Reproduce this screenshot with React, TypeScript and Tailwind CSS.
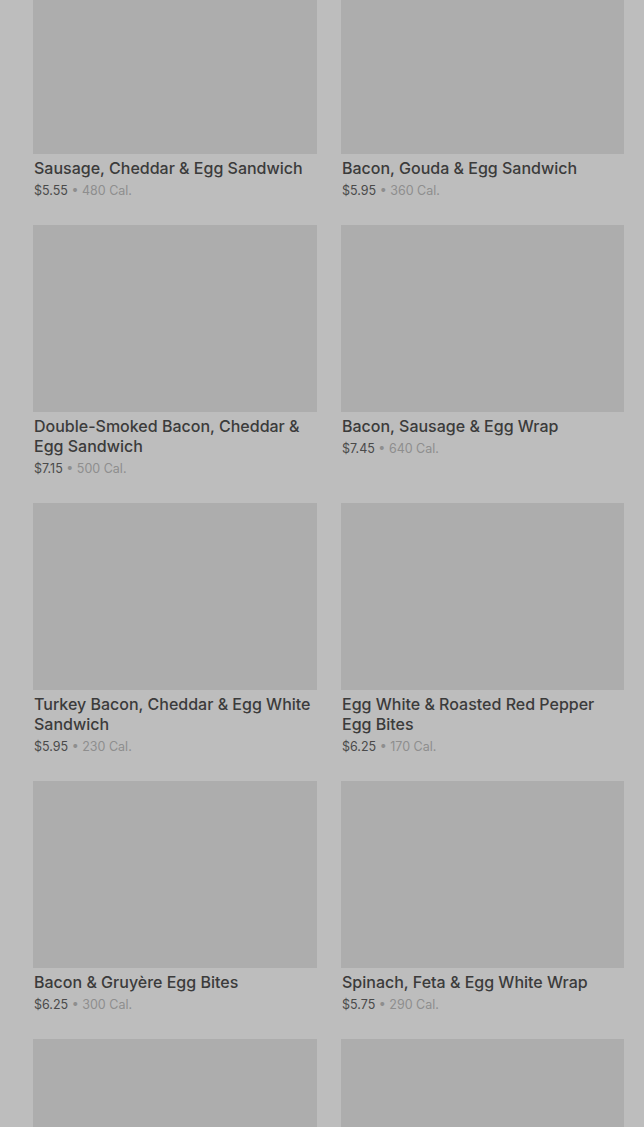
type Item = { name?: string; price?: string; cal?: string }

const items: Item[] = [
  { name: 'Sausage, Cheddar & Egg Sandwich', price: '$5.55', cal: '480 Cal.' },
  { name: 'Bacon, Gouda & Egg Sandwich', price: '$5.95', cal: '360 Cal.' },
  { name: 'Double-Smoked Bacon, Cheddar & Egg Sandwich', price: '$7.15', cal: '500 Cal.' },
  { name: 'Bacon, Sausage & Egg Wrap', price: '$7.45', cal: '640 Cal.' },
  { name: 'Turkey Bacon, Cheddar & Egg White Sandwich', price: '$5.95', cal: '230 Cal.' },
  { name: 'Egg White & Roasted Red Pepper Egg Bites', price: '$6.25', cal: '170 Cal.' },
  { name: 'Bacon & Gruyère Egg Bites', price: '$6.25', cal: '300 Cal.' },
  { name: 'Spinach, Feta & Egg White Wrap', price: '$5.75', cal: '290 Cal.' },
  {},
  {},
]

export default function App() {
  return (
    <div className="min-h-screen bg-[#bdbdbd] font-['Inter',sans-serif]">
      <div className="-mt-[33px] grid grid-cols-[284px_283px] gap-x-6 gap-y-6 pl-[33px] pr-5 pb-6 items-start">
        {items.map((item, i) => (
          <div key={i} className="flex flex-col">
            <div className="h-[187px] w-full bg-[#adadad]" />
            {item.name && (
              <>
                <div className="mt-1 pl-px text-[16px] leading-5 font-medium text-[#3b3b3b]">
                  {item.name}
                </div>
                <div className="mt-[3px] pl-px text-[12.5px] leading-5 text-[#4a4a4a]">
                  {item.price}
                  <span className="text-[#8e8e8e]"> • {item.cal}</span>
                </div>
              </>
            )}
          </div>
        ))}
      </div>
    </div>
  )
}
